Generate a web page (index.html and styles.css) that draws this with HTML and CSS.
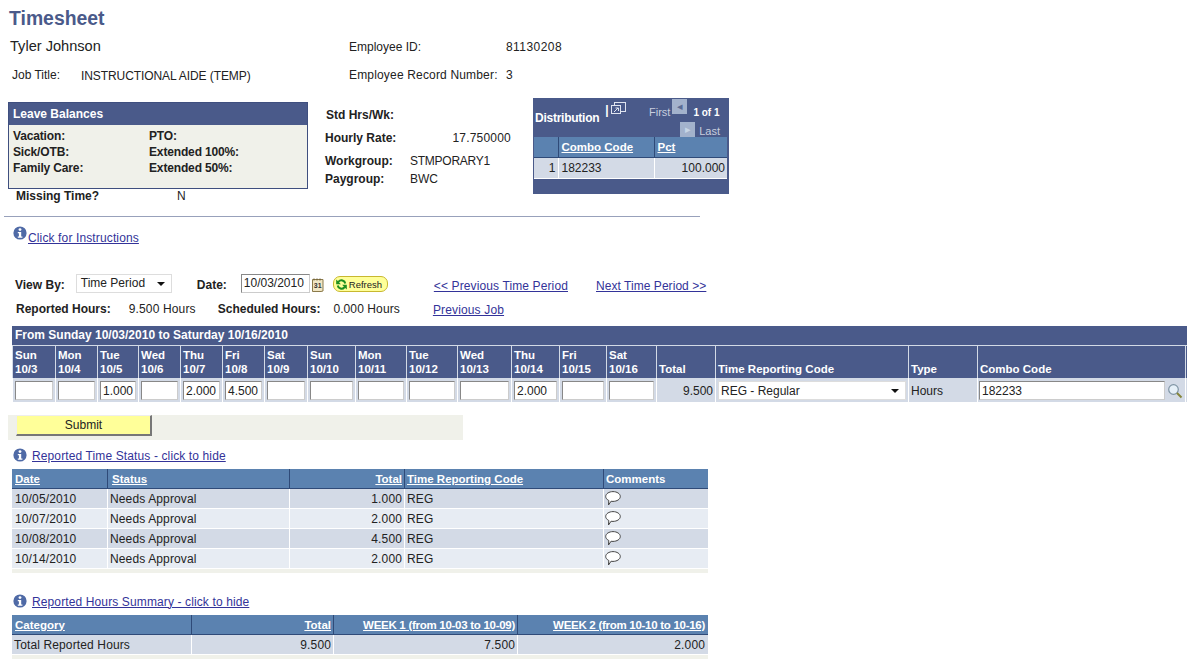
FILE: index.html
```html
<!DOCTYPE html>
<html lang="en">
<head>
  <meta charset="utf-8">
  <title>Timesheet</title>
  <link rel="stylesheet" href="styles.css">
</head>
<body>
  <svg class="sprites" width="0" height="0">
    <symbol id="info" viewBox="0 0 14 14">
      <circle cx="7" cy="7" r="6.6" fill="#4f6aa6"/>
      <circle cx="7" cy="3.6" r="1.4" fill="#fff"/>
      <path d="M4.8 6h3.4v4.4h1.2v1.3H4.800v-1.300h1.100V7.300H4.800z" fill="#fff"/>
    </symbol>
    <symbol id="bubble" viewBox="0 0 16 15">
      <path d="M8 .6c4 0 7.300 2.200 7.300 4.900S12 10.400 8 10.400c-.7 0-1.300 0-1.900-.2L3.500 14l.3-4.500C1.900 8.600.7 7.100.7 5.500.7 2.800 4 .6 8 .6z" fill="#fff" stroke="#444" stroke-width="1"/>
    </symbol>
  </svg>

  <h1 class="page-title">Timesheet</h1>

  <div class="who-row">
    <div class="emp-name">Tyler Johnson</div>
    <div class="who-cell">Employee ID:</div>
    <div class="who-cell emp-id">81130208</div>
  </div>
  <div class="job-row">
    <div class="job-label">Job Title:</div>
    <div class="job-value">INSTRUCTIONAL AIDE (TEMP)</div>
    <div class="rec-label">Employee Record Number:</div>
    <div>3</div>
  </div>

  <div class="info-row">
    <div class="left-col">
      <div class="leave-box">
        <div class="leave-head">Leave Balances</div>
        <div class="leave-body">
          <span>Vacation:</span><span>PTO:</span>
          <span>Sick/OTB:</span><span>Extended 100%:</span>
          <span>Family Care:</span><span>Extended 50%:</span>
        </div>
      </div>
      <div class="missing"><b>Missing Time?</b><span>N</span></div>
    </div>

    <div class="pay-col">
      <b class="pay-std">Std Hrs/Wk:</b><span class="pay-std"></span>
      <b class="pay-rate">Hourly Rate:</b><span class="pay-rate pay-num num">17.750000</span>
      <b class="pay-wg">Workgroup:</b><span class="pay-wg pay-val">STMPORARY1</span>
      <b>Paygroup:</b><span>BWC</span>
    </div>

    <div class="dist-box">
      <div class="dist-head">
        <b class="dist-title">Distribution</b>
        <span class="dist-sep">|</span>
        <svg class="dist-zoom" width="15" height="12" viewBox="0 0 15 12">
          <rect x="3.500" y=".5" width="11" height="9" fill="none" stroke="#dfe4f0"/>
          <rect x=".5" y="3.500" width="9" height="8" fill="#4a5a8a" stroke="#dfe4f0"/>
          <path d="M3 10l4-4M4.500 6H7.500V9" fill="none" stroke="#dfe4f0"/>
        </svg>
        <div class="dist-nav">
          <div class="nav-line">
            <span>First</span><span class="nav-btn nav-first">&#9666;</span><b>1 of 1</b>
          </div>
          <div class="nav-line nav-last">
            <span class="nav-btn nav-next">&#9656;</span><span>Last</span>
          </div>
        </div>
      </div>
      <table class="dist-table">
        <colgroup><col class="dc1"><col class="dc2"><col class="dc3"></colgroup>
        <tr class="head-blue"><th></th><th><a href="#">Combo Code</a></th><th><a href="#">Pct</a></th></tr>
        <tr><td class="num">1</td><td>182233</td><td class="num">100.000</td></tr>
      </table>
    </div>
  </div>

  <hr class="rule">

  <div class="instr-row">
    <svg class="info-ico" width="14" height="14"><use href="#info"/></svg><a href="#">Click for Instructions</a>
  </div>

  <div class="view-row">
    <b>View By:</b>
    <div class="fake-select view-select">Time Period<span class="caret"></span></div>
    <b class="date-label">Date:</b>
    <div class="date-input">10/03/2010</div>
    <svg class="cal-ico" width="12" height="14" viewBox="0 0 12 14">
      <path d="M.5 1.500h10.500v11.500l-2 .5H.5z" fill="#f1e6c4" stroke="#8b7a4a"/>
      <path d="M2 .5v2M5 .5v2M8 .5v2" stroke="#6b5a30"/>
      <text x="1.800" y="10" class="cal-text">31</text>
    </svg>
    <div class="refresh-btn">
      <svg width="13" height="13" viewBox="0 0 11 11">
        <path d="M9.500 4.500A4 4 0 0 0 2.400 2.600L1 1.300v4h4L3.500 3.800a2.500 2.500 0 0 1 4.400 1z" fill="#1f8f1f"/>
        <path d="M1.500 6.500a4 4 0 0 0 7.100 1.900L10 9.700v-4H6l1.500 1.500a2.500 2.500 0 0 1-4.400-1z" fill="#1f8f1f"/>
      </svg>Refresh
    </div>
    <a class="prev-link" href="#">&lt;&lt; Previous Time Period</a>
    <a class="next-link" href="#">Next Time Period &gt;&gt;</a>
  </div>

  <div class="hours-row">
    <b>Reported Hours:</b>
    <span class="hours-val">9.500 Hours</span>
    <b class="sched-label">Scheduled Hours:</b>
    <span class="sched-val">0.000 Hours</span>
    <a href="#">Previous Job</a>
  </div>

  <div class="grid-title">From Sunday 10/03/2010 to Saturday 10/16/2010</div>
  <table class="time-grid">
    <colgroup>
      <col class="w43"><col class="w42"><col class="w41"><col class="w42"><col class="w42"><col class="w42"><col class="w43">
      <col class="w48"><col class="w51"><col class="w51"><col class="w54"><col class="w48"><col class="w47"><col class="w50">
      <col class="w59"><col class="w193"><col class="w69"><col class="w208"><col class="w2">
    </colgroup>
    <thead>
      <tr>
        <th>Sun<br>10/3</th><th>Mon<br>10/4</th><th>Tue<br>10/5</th><th>Wed<br>10/6</th><th>Thu<br>10/7</th><th>Fri<br>10/8</th><th>Sat<br>10/9</th>
        <th>Sun<br>10/10</th><th>Mon<br>10/11</th><th>Tue<br>10/12</th><th>Wed<br>10/13</th><th>Thu<br>10/14</th><th>Fri<br>10/15</th><th>Sat<br>10/16</th>
        <th>Total</th><th>Time Reporting Code</th><th>Type</th><th>Combo Code</th><th></th>
      </tr>
    </thead>
    <tbody>
      <tr>
        <td><div class="day-input"></div></td>
        <td><div class="day-input"></div></td>
        <td><div class="day-input">1.000</div></td>
        <td><div class="day-input"></div></td>
        <td><div class="day-input">2.000</div></td>
        <td><div class="day-input">4.500</div></td>
        <td><div class="day-input"></div></td>
        <td><div class="day-input"></div></td>
        <td><div class="day-input"></div></td>
        <td><div class="day-input"></div></td>
        <td><div class="day-input"></div></td>
        <td><div class="day-input">2.000</div></td>
        <td><div class="day-input"></div></td>
        <td><div class="day-input"></div></td>
        <td class="num">9.500</td>
        <td><div class="fake-select trc-select">REG - Regular<span class="caret"></span></div></td>
        <td>Hours</td>
        <td class="combo-cell">
          <div class="combo-wrap">
            <div class="combo-input">182233</div>
            <svg class="lookup" width="16" height="16" viewBox="0 0 16 16">
              <circle cx="6.500" cy="6.500" r="4.800" fill="#e6f0f8" stroke="#7f94a4" stroke-width="1.200"/>
              <path d="M10 10l4.500 4.500" stroke="#85853a" stroke-width="2"/>
            </svg>
          </div>
        </td>
        <td></td>
      </tr>
    </tbody>
  </table>

  <div class="submit-bar"><div class="submit-btn">Submit</div></div>

  <div class="section-link">
    <svg class="info-ico" width="14" height="14"><use href="#info"/></svg><a href="#">Reported Time Status - click to hide</a>
  </div>
  <table class="report status-table">
    <colgroup><col class="s1"><col class="s2"><col class="s3"><col class="s4"><col class="s5"></colgroup>
    <tr class="head-blue"><th><a href="#">Date</a></th><th class="status-th"><a href="#">Status</a></th><th class="num"><a href="#">Total</a></th><th><a href="#">Time Reporting Code</a></th><th>Comments</th></tr>
    <tr><td>10/05/2010</td><td>Needs Approval</td><td class="num">1.000</td><td>REG</td><td><svg class="bubble" width="16" height="15"><use href="#bubble"/></svg></td></tr>
    <tr class="alt"><td>10/07/2010</td><td>Needs Approval</td><td class="num">2.000</td><td>REG</td><td><svg class="bubble" width="16" height="15"><use href="#bubble"/></svg></td></tr>
    <tr><td>10/08/2010</td><td>Needs Approval</td><td class="num">4.500</td><td>REG</td><td><svg class="bubble" width="16" height="15"><use href="#bubble"/></svg></td></tr>
    <tr class="alt"><td>10/14/2010</td><td>Needs Approval</td><td class="num">2.000</td><td>REG</td><td><svg class="bubble" width="16" height="15"><use href="#bubble"/></svg></td></tr>
  </table>
  <div class="table-foot"></div>

  <div class="section-link summary-link">
    <svg class="info-ico" width="14" height="14"><use href="#info"/></svg><a href="#">Reported Hours Summary - click to hide</a>
  </div>
  <table class="report summary-table">
    <colgroup><col class="r1"><col class="r2"><col class="r3"><col class="r4"></colgroup>
    <tr class="head-blue"><th><a href="#">Category</a></th><th class="num"><a href="#">Total</a></th><th class="num week"><a href="#">WEEK 1 (from 10-03 to 10-09)</a></th><th class="num week"><a href="#">WEEK 2 (from 10-10 to 10-16)</a></th></tr>
    <tr><td>Total Reported Hours</td><td class="num">9.500</td><td class="num">7.500</td><td class="num">2.000</td></tr>
  </table>
  <div class="table-foot"></div>
</body>
</html>
```

FILE: styles.css
```css
/* page */
body {
  margin: 0;
  font-family: "Liberation Sans", Arial, sans-serif;
  font-size: 12px;
  color: #222;
  background: #fff;
  width: 1187px;
  height: 670px;
  overflow: hidden;
}
a {
  color: #333399;
}
.sprites {
  position: absolute;
}
.num {
  text-align: right;
}

/* top */
.page-title {
  margin: 0;
  padding: 8px 0 0 9px;
  height: 29px;
  font-size: 19.4px;
  line-height: 21px;
  color: #4a5a8a;
}
.who-row {
  display: grid;
  grid-template-columns: 349px 157px auto;
  height: 28px;
  margin-top: -9px;
  padding-top: 9px;
  line-height: 18px;
}
.emp-name {
  font-size: 14.6px;
  padding-left: 10px;
}
.who-cell {
  padding-top: 1px;
}
.emp-id {
  letter-spacing: .45px;
}
.job-row {
  display: grid;
  grid-template-columns: 81px 268px 157px auto;
  height: 27px;
  padding-top: 1px;
  line-height: 18px;
}
.job-label {
  padding-left: 12px;
}
.job-value {
  padding-top: 1px;
  letter-spacing: -.08px;
}
.rec-label {
  letter-spacing: .17px;
}

/* leave balances, pay info, distribution */
.info-row {
  display: flex;
  height: 123px;
}
.left-col {
  width: 300px;
  margin-left: 8px;
  padding-top: 9px;
}
.leave-box {
  box-sizing: border-box;
  height: 87px;
  border: 1px solid #3f4f7f;
  background: #f0f1ea;
  padding: 0 2px 2px;
}
.leave-head {
  margin: 0 -2px;
  height: 22px;
  line-height: 23px;
  padding-left: 4px;
  background: #4a5a8a;
  color: #fff;
  font-weight: bold;
}
.leave-body {
  display: grid;
  grid-template-columns: 136px auto;
  padding: 3px 0 0 2px;
  line-height: 16px;
  font-weight: bold;
  letter-spacing: -.15px;
}
.missing {
  display: grid;
  grid-template-columns: 161px auto;
  padding: 0 0 0 8px;
  line-height: 15px;
}
.pay-col {
  width: 192px;
  margin-left: 17px;
  padding-top: 15px;
  display: grid;
  grid-template-columns: 85px 101px;
  grid-auto-rows: min-content;
  line-height: 15px;
  align-content: start;
}
.pay-std {
  height: 23px;
  padding-left: 1px;
}
.pay-rate {
  height: 23px;
}
.pay-num {
  letter-spacing: .2px;
}
.pay-wg {
  height: 18px;
}
.pay-val {
  letter-spacing: -.25px;
}
.dist-box {
  box-sizing: border-box;
  width: 196px;
  height: 96px;
  margin-left: 16px;
  margin-top: 5px;
  background: #4a5a8a;
  color: #fff;
}
.dist-head {
  display: flex;
  height: 39px;
}
.dist-title {
  padding: 13px 0 0 2px;
  letter-spacing: -.25px;
}
.dist-sep {
  padding: 5px 0 0 6px;
  font-weight: bold;
}
.dist-zoom {
  margin: 4px 0 0 2px;
}
.dist-nav {
  margin-left: auto;
  width: 76px;
  padding-top: 5px;
  padding-right: 4px;
  font-size: 11px;
  color: #c8cede;
}
.nav-line {
  display: flex;
  align-items: center;
  gap: 2px;
  height: 18px;
}
.nav-line b {
  color: #fff;
  font-size: 10px;
  margin-left: 4px;
}
.nav-last {
  justify-content: flex-end;
  margin-top: 1px;
  padding-right: 5px;
  gap: 4px;
}
.nav-btn {
  width: 15px;
  height: 15px;
  background: #a3b2cc;
  font-size: 11px;
  line-height: 14px;
  text-align: center;
}
.nav-first {
  margin-top: -12px;
  color: #5a6c94;
}
.nav-next {
  margin-top: -4px;
  color: #c8d6e6;
}
.dist-table {
  width: 193px;
  margin-left: 1px;
  table-layout: fixed;
  border-collapse: collapse;
  color: #222;
}
.dc1 { width: 24px; }
.dc2 { width: 96px; }
.dist-table th, .dist-table td {
  height: 20px;
  padding: 0 2px 0 3px;
  border-left: 1px solid #fff;
  background: #d3dae6;
}
.dist-table th {
  background: #5b82b0;
  border-left-color: #2f4a78;
}
.dist-table tr + tr td {
  border-bottom: 1px solid #fff;
}
.dist-table td:first-child, .dist-table th:first-child {
  border-left: 0;
}

/* blue header row shared by the tables */
.head-blue th {
  background: #5b82b0;
  border-left: 1px solid #2f4a78;
  border-bottom: 1px solid #2f4a78;
  color: #fff;
  text-align: left;
  font-weight: bold;
  font-size: 11.5px;
}
.head-blue th a {
  color: #fff;
}
.head-blue th.num {
  text-align: right;
}

.rule {
  margin: 0 0 0 4px;
  width: 696px;
  height: 1px;
  border: 0;
  background: #98a1bb;
}
.instr-row {
  display: flex;
  align-items: flex-start;
  height: 46px;
  padding: 10px 0 0 13px;
  line-height: 22px;
  letter-spacing: .13px;
}
.instr-row .info-ico {
  margin-top: -1px;
  margin-right: 1px;
}

/* view by */
.view-row {
  display: flex;
  align-items: center;
  height: 24px;
  padding-left: 15px;
}
.fake-select {
  position: relative;
  background: #fff;
  border: 1px solid #ddd;
  box-sizing: border-box;
  height: 19px;
  line-height: 16px;
  padding-left: 4px;
}
.caret {
  position: absolute;
  right: 6px;
  top: 7px;
  border: 4px solid transparent;
  border-top-color: #111;
  border-bottom: 0;
}
.view-select {
  width: 96px;
  margin-left: 11px;
  margin-top: -3px;
}
.date-label {
  margin-left: 25px;
}
.date-input {
  box-sizing: border-box;
  width: 69px;
  height: 19px;
  margin-left: 14px;
  margin-top: -3px;
  padding-left: 2px;
  line-height: 16px;
  border: 1px solid #888;
  border-right-color: #ccc;
  border-bottom-color: #ccc;
}
.cal-ico {
  margin-left: 2px;
}
.cal-text {
  font-size: 7px;
  font-weight: bold;
  fill: #333;
}
.refresh-btn {
  display: flex;
  align-items: center;
  gap: 1px;
  box-sizing: border-box;
  width: 55px;
  height: 16px;
  margin-left: 9px;
  margin-top: -2px;
  padding-left: 1px;
  border: 1px solid #c8b830;
  border-radius: 7px;
  background: #ffff99;
  font-size: 9.5px;
  white-space: nowrap;
}
.prev-link {
  margin: 2px 0 0 46px;
  letter-spacing: .12px;
}
.next-link {
  margin: 2px 0 0 28px;
  letter-spacing: .05px;
}
.hours-row {
  display: flex;
  align-items: center;
  height: 24px;
  padding-left: 16px;
}
.hours-val {
  margin-left: 18px;
  letter-spacing: .15px;
}
.sched-label {
  margin-left: 22px;
}
.sched-val {
  margin-left: 13px;
  letter-spacing: .1px;
}
.hours-row a {
  margin: 2px 0 0 33px;
  letter-spacing: .15px;
}

/* time grid */
.grid-title {
  margin: 5px 0 0 12px;
  height: 19px;
  line-height: 19px;
  padding-left: 3px;
  background: #4a5a8a;
  color: #fff;
  font-weight: bold;
}
.time-grid {
  margin-left: 12px;
  width: 1175px;
  table-layout: fixed;
  border-collapse: separate;
  border-spacing: 0;
}
.w2 { width: 2px; }
.w41 { width: 41px; }
.w42 { width: 42px; }
.w43 { width: 43px; }
.w47 { width: 47px; }
.w48 { width: 48px; }
.w50 { width: 50px; }
.w51 { width: 51px; }
.w54 { width: 54px; }
.w59 { width: 59px; }
.w69 { width: 69px; }
.w193 { width: 193px; }
.w208 { width: 208px; }
.time-grid th {
  height: 30px;
  padding: 0 0 2px 2px;
  background: #4a5a8a;
  border-top: 1px solid #d3dae6;
  border-left: 1px solid #d3dae6;
  color: #fff;
  font-size: 11.5px;
  line-height: 14px;
  text-align: left;
  vertical-align: bottom;
  overflow: hidden;
}
.time-grid td {
  height: 24px;
  padding: 1px 2px 0;
  background: #d3dae6;
  border-left: 1px solid #fff;
  box-sizing: border-box;
}
.day-input {
  box-sizing: border-box;
  height: 19px;
  line-height: 18px;
  padding-left: 2px;
  background: #fff;
  border: 1px solid #888;
  border-right-color: #ccc;
  border-bottom-color: #ccc;
}
.trc-select {
  padding-left: 2px;
  line-height: 18px;
}
.time-grid .combo-cell {
  padding-left: 1px;
}
.combo-wrap {
  display: flex;
  align-items: center;
}
.combo-input {
  flex: 1;
  box-sizing: border-box;
  height: 19px;
  line-height: 18px;
  padding-left: 2px;
  background: #fff;
  border: 1px solid #888;
  border-right-color: #ccc;
  border-bottom-color: #ccc;
}
.lookup {
  margin: 1px 0 0 2px;
}

/* submit */
.submit-bar {
  width: 455px;
  height: 25px;
  margin: 13px 0 0 8px;
  background: #f0f1ea;
}
.submit-btn {
  box-sizing: border-box;
  width: 136px;
  height: 21px;
  margin-left: 8px;
  border-right: 2px solid #777;
  border-bottom: 2px solid #777;
  border-top: 1px solid #eee;
  border-left: 1px solid #eee;
  background: #ffff99;
  text-align: center;
  line-height: 18px;
}

/* lower tables */
.section-link {
  display: flex;
  align-items: center;
  height: 29px;
  padding-left: 13px;
  letter-spacing: .12px;
}
.section-link a {
  margin-top: 2px;
}
.section-link .info-ico {
  margin-right: 5px;
}
.summary-link {
  margin-top: 13px;
}
.report {
  margin-left: 12px;
  width: 696px;
  table-layout: fixed;
  border-collapse: separate;
  border-spacing: 0;
  letter-spacing: .13px;
}
.report th {
  height: 19px;
  padding: 0 2px;
  letter-spacing: 0;
}
.report th:first-child {
  padding-left: 3px;
}
.report .status-th {
  padding-left: 4px;
}
.report .week {
  letter-spacing: -.28px;
}
.report td {
  height: 19px;
  padding: 0 2px;
  background: #d3dae6;
  border-left: 1px solid #fff;
  border-bottom: 1px solid #fff;
}
.report tr.alt td {
  background: #e7ecf3;
}
.report td:first-child {
  border-left: 0;
  padding-left: 3px;
}
.report th:first-child {
  border-left: 0;
}
.summary-table td:first-child {
  padding-left: 2px;
}
.summary-table td:last-child, .summary-table th:last-child {
  padding-right: 3px;
}
.s1 { width: 95px; }
.s2 { width: 182px; }
.s3 { width: 115px; }
.s4 { width: 199px; }
.r1 { width: 179px; }
.r2 { width: 142px; }
.r3 { width: 184px; }
.bubble {
  display: block;
  margin-left: -1px;
}
.table-foot {
  width: 696px;
  height: 4px;
  margin-left: 12px;
  background: #f0f1ea;
}
```
